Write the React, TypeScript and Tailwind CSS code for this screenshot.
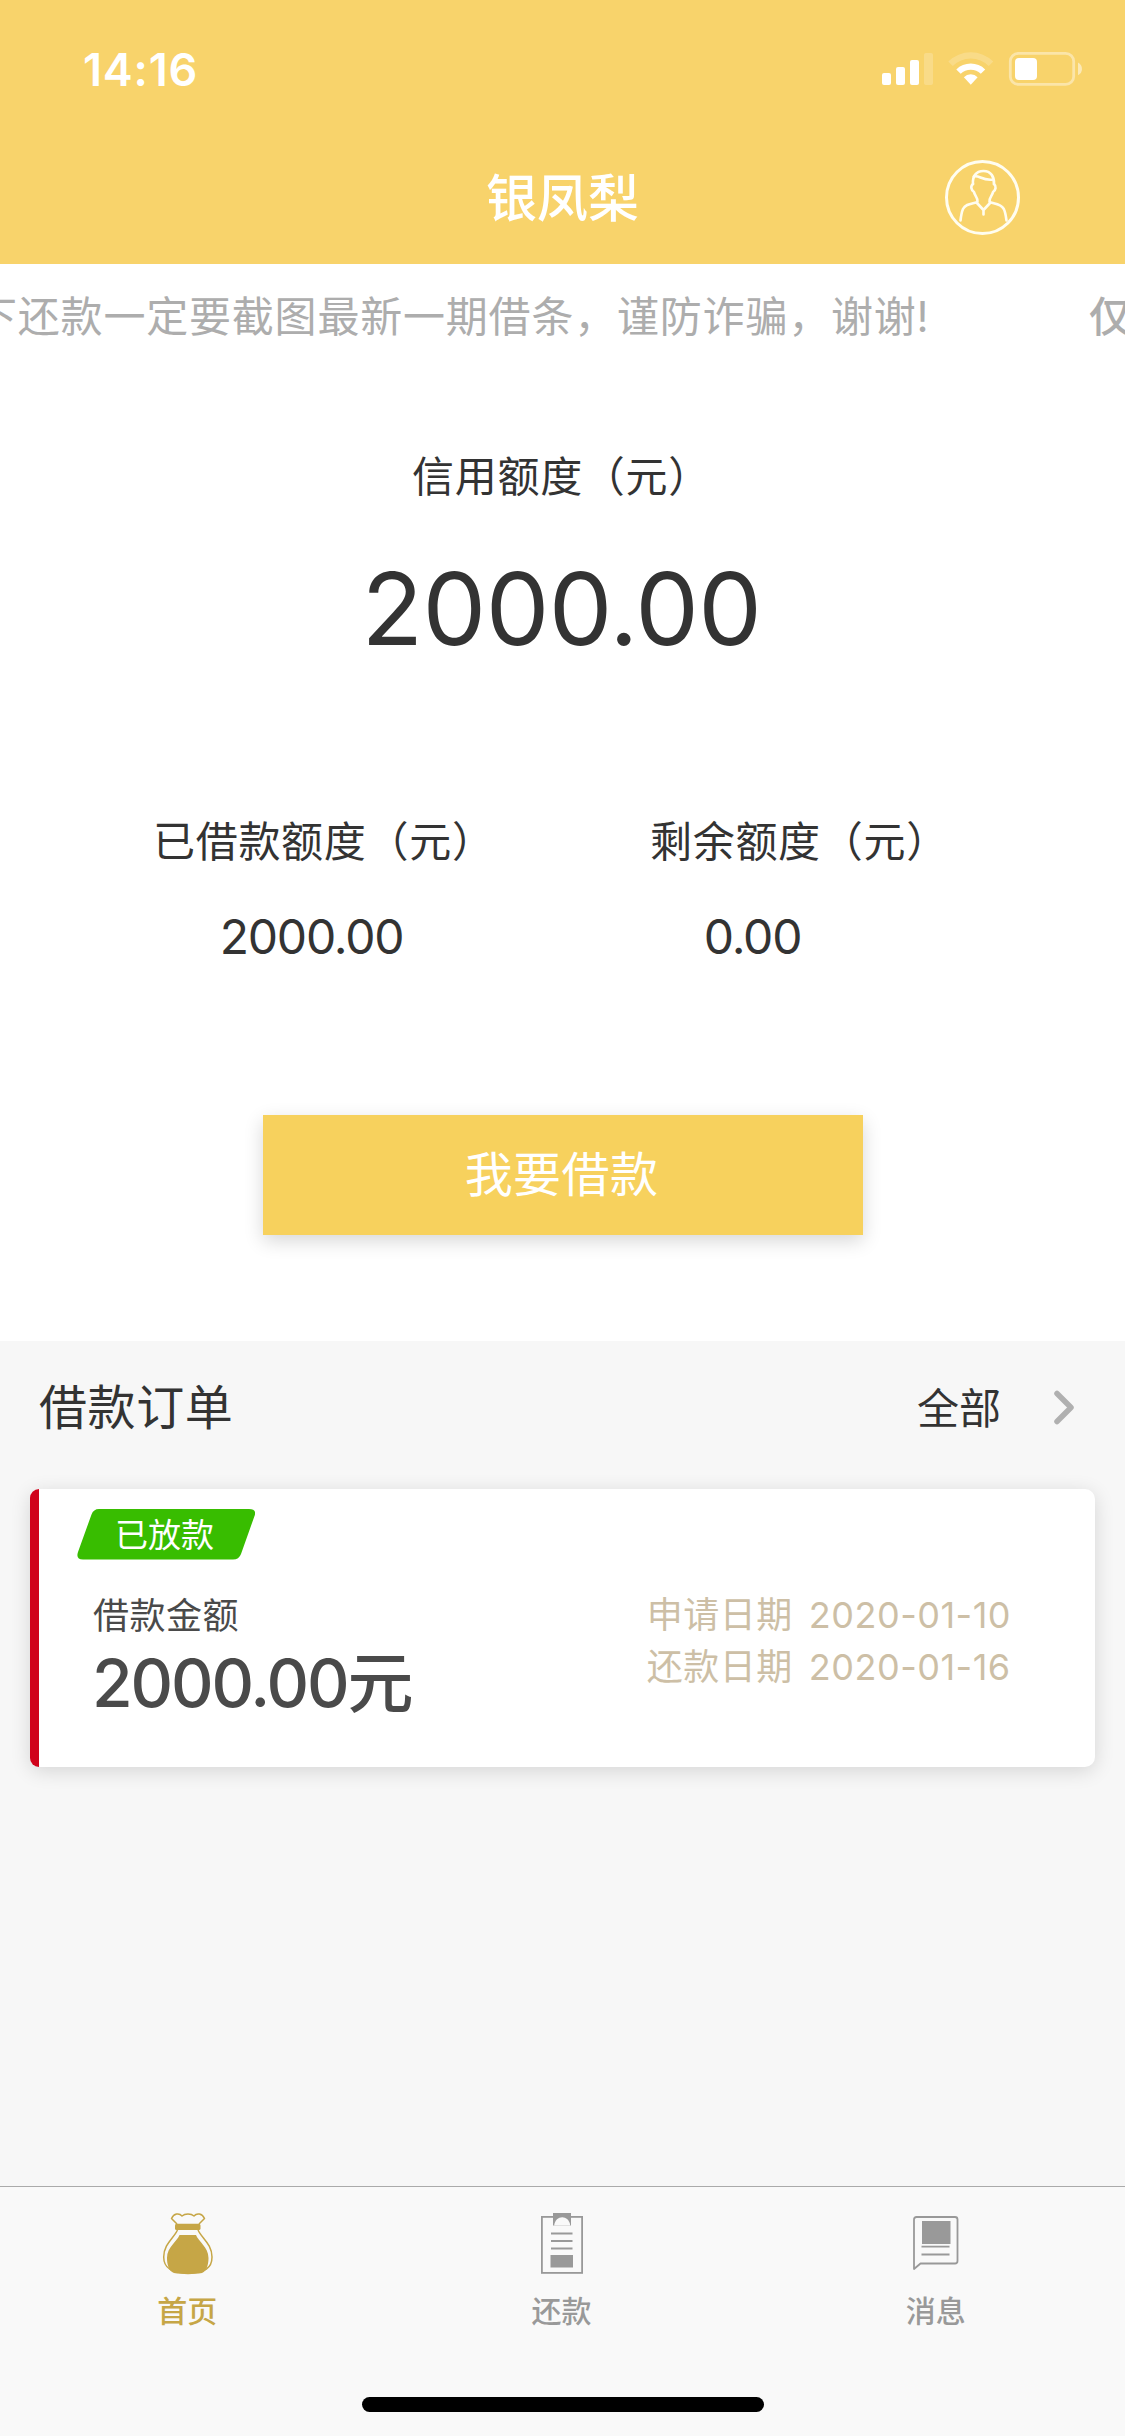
import type { ReactNode } from 'react';

interface Order {
  status: string;
  amount: string;
  applyDate: string;
  repayDate: string;
}

interface TabItem {
  label: string;
  icon: ReactNode;
  active?: boolean;
}

const orders: Order[] = [
  {
    status: '已放款',
    amount: '2000.00',
    applyDate: '2020-01-10',
    repayDate: '2020-01-16',
  },
];

function StatusIcons() {
  return (
    <svg width="202" height="38" viewBox="0 0 202 38" fill="#fff">
      <rect x="0" y="23" width="9" height="12" rx="2" />
      <rect x="14" y="17" width="9" height="18" rx="2" />
      <rect x="28" y="10" width="9" height="25" rx="2" />
      <rect x="42" y="3" width="9" height="32" rx="2" opacity="0.2" />
      <path
        d="M66.3 11.5 A32 32 0 0 1 111.2 11.5 L106.7 16 A25.5 25.5 0 0 0 70.8 16 Z"
        opacity="0.2"
      />
      <path d="M74.3 19.4 A20.7 20.7 0 0 1 103.2 19.4 L98.8 23.8 A14.3 14.3 0 0 0 78.7 23.8 Z" />
      <path d="M81.9 27.2 A9.5 9.5 0 0 1 95.6 27.2 L88.8 34.8 Z" />
      <rect
        x="128.3"
        y="3.4"
        width="63.4"
        height="31"
        rx="8"
        fill="none"
        stroke="#fff"
        strokeWidth="2.8"
        opacity="0.42"
      />
      <rect x="133" y="8" width="22" height="22" rx="4" />
      <path d="M196 12.5 C201.3 15 201.3 23 196 25.2 Z" opacity="0.5" />
    </svg>
  );
}

function UserIcon() {
  return (
    <svg
      width="76"
      height="76"
      viewBox="0 0 76 76"
      fill="none"
      stroke="#fffdf0"
      strokeWidth="2.6"
      strokeLinecap="round"
      strokeLinejoin="round"
    >
      <circle cx="37.5" cy="37.5" r="36" strokeWidth="3" />
      <path d="M28 24 C25.3 26 26 30 29 32 C29.5 35.5 33 38 32.5 41.5 L31.5 42.5 C26 44 20.5 44 18 49 C16.5 52.5 16 56 15.5 60.5" />
      <path d="M49 24 C51.5 26 51 30 48 32 C47.5 35.5 44 38 44.5 41.5 L45.5 42.5 C51 44 56 44 58.8 49 C60.5 52.5 60.8 56 61.5 60.5" />
      <path d="M28 24 C27.3 17 30.5 11 38.5 11 C46 11 49.5 17 49 24" />
      <path d="M28.8 16.5 C34 14.5 37 21 48 19.5" />
      <path d="M31.5 42.5 L38.5 50 L45.5 42.5 M38.5 50 V54.5" />
    </svg>
  );
}

function BagIcon() {
  return (
    <svg width="52" height="64" viewBox="0 0 52 64" fill="none" stroke="#c6a646" strokeWidth="1.5">
      <path
        d="M15 13 L9.5 7.5 C12 2.5 17 1.5 20 5 C23 2.3 29 2.3 32 5 C35 1.5 40 2.5 42.5 7.5 L37 13"
        strokeLinejoin="round"
      />
      <rect x="13" y="12.8" width="25.5" height="6.2" rx="1.6" fill="#c6a646" stroke="none" />
      <path d="M15.5 19 C12 27 1.7 33 1.7 46 C1.7 57 9 62 26 62 C43 62 50 57 50 46 C50 33 39.5 27 36 19" />
      <path
        d="M17.5 24 H34 C36 30 46.5 36 46.5 47 C46.5 53 45 60 40 62 C32 63.5 20 63.5 12 62 C6.5 60 5 53 5 47 C5 36 15.5 30 17.5 24 Z"
        fill="#c6a646"
        stroke="none"
      />
    </svg>
  );
}

function BillIcon() {
  return (
    <svg width="42" height="62" viewBox="0 0 42 62" fill="none" stroke="#999" strokeWidth="1.8">
      <rect x="0.9" y="3.9" width="40.2" height="56" />
      <path d="M12 0 H30 V12.5 H12 Z" fill="#999" stroke="none" />
      <path d="M13.2 12.6 C14.2 1.5 28.2 1.5 29.2 12.6 Z" fill="#f9f9f9" stroke="none" />
      <path d="M10 20.5 H31.5 M10 28 H31.5 M10 35.5 H31.5" />
      <rect x="9.5" y="42" width="22.5" height="12.5" fill="#999" stroke="none" />
    </svg>
  );
}

function MessageIcon() {
  return (
    <svg width="46" height="59" viewBox="0 0 46 59" fill="none" stroke="#999" strokeWidth="1.8">
      <path
        d="M1 53 V3.5 Q1 1 3.5 1 H42 Q44.5 1 44.5 3.5 V45 Q44.5 47.5 42 47.5 H7.5 Z"
        strokeLinejoin="round"
      />
      <rect x="9" y="5" width="28.5" height="23" fill="#999" stroke="none" />
      <path d="M8.5 30.7 H36.5 M8.5 38.5 H36.5" />
    </svg>
  );
}

const tabs: TabItem[] = [
  { label: '首页', icon: <BagIcon />, active: true },
  { label: '还款', icon: <BillIcon /> },
  { label: '消息', icon: <MessageIcon /> },
];

function QuotaLabel({ text }: { text: string }) {
  return (
    <p className="whitespace-nowrap text-[42px] leading-[60px] tracking-[0.7px]">{text}</p>
  );
}

function OrderCard({ order }: { order: Order }) {
  return (
    <div className="mx-[30px] flex h-[278px] rounded-[10px] bg-white shadow-[0_4px_20px_rgba(0,0,0,0.14)]">
      <div className="w-[9px] shrink-0 rounded-l-[10px] bg-[#d0021b]" />
      <div className="flex flex-1 justify-between pl-[38px] pr-[84px]">
        <div className="pt-[19px]">
          <div className="relative flex h-[52px] w-[178px] items-center justify-center">
            <svg className="absolute inset-0" width="178" height="52" viewBox="0 0 178 52">
              <path
                d="M22 1 H172 Q180 1 177.5 8 L164 46 Q162 51.5 156 51.5 H6 Q-1.5 51.5 1 44 L14.5 6.5 Q16.5 1 22 1 Z"
                fill="#38bd00"
              />
            </svg>
            <span className="relative pr-[3px] pt-px text-[33px] leading-[40px] text-white">{order.status}</span>
          </div>
          <div className="pl-[16px]">
            <p className="mt-[32px] text-[36px] leading-[48px] tracking-[0.5px] text-[#4a4a4a]">借款金额</p>
            <p className="-ml-px mt-[7px] flex items-baseline text-[66px] font-medium leading-[72px] text-[#4a4a4a]">
              <span className="tracking-[-2.1px]">{order.amount}</span>
              <span>元</span>
            </p>
          </div>
        </div>
        <div className="pt-[100px] text-[36px] leading-[52px] tracking-[0.5px] text-[#cdbfa6]">
          <div className="flex gap-4">
            <span>申请日期</span>
            <span>{order.applyDate}</span>
          </div>
          <div className="flex gap-4">
            <span>还款日期</span>
            <span>{order.repayDate}</span>
          </div>
        </div>
      </div>
    </div>
  );
}

export default function App() {
  return (
    <div
      lang="zh-CN"
      className="flex h-[2436px] w-[1125px] flex-col overflow-hidden bg-white font-['Inter','Noto_Sans_CJK_SC',sans-serif] text-[#333]"
    >
      <header className="h-[264px] shrink-0 bg-[#f8d36b] text-white">
        <div className="flex h-[132px] items-center justify-between pl-[83px] pr-[41px] pt-[6px]">
          <span className="pt-px text-[45px] font-semibold leading-[54px] tracking-[0.8px]">14:16</span>
          <StatusIcons />
        </div>
        <div className="grid h-[132px] grid-cols-[1fr_auto_1fr] items-center">
          <div />
          <h1 className="pt-[2px] text-[51px] font-medium leading-[60px]">银凤梨</h1>
          <div className="flex justify-end pr-[104px]">
            <UserIcon />
          </div>
        </div>
      </header>

      {/* scrolling notice */}
      <div className="flex h-[106px] shrink-0 items-center overflow-hidden whitespace-nowrap text-[42px] leading-[60px] tracking-[0.8px] text-[#adadad]">
        <span className="-ml-[25px] w-[1114px] shrink-0">下还款一定要截图最新一期借条，谨防诈骗，谢谢!</span>
        <span className="font-medium">仅</span>
      </div>

      <section className="flex h-[971px] shrink-0 flex-col items-center">
        <div className="mr-[2px] mt-[77px]">
          <QuotaLabel text="信用额度（元）" />
        </div>
        <p className="mr-[2px] mt-[41px] text-[101px] leading-[120px] tracking-[-0.6px]">2000.00</p>
        <div className="mt-[144px] flex w-full">
          <div className="w-[562px] pl-[153px]">
            <QuotaLabel text="已借款额度（元）" />
            <p className="mt-[35px] w-[317px] text-center text-[48px] leading-[60px] tracking-[-1.2px]">2000.00</p>
          </div>
          <div className="w-[563px] pl-[88px]">
            <QuotaLabel text="剩余额度（元）" />
            <p className="mt-[35px] w-[205px] text-center text-[48px] leading-[60px] tracking-[-1.2px]">0.00</p>
          </div>
        </div>
        <button className="mt-[148px] h-[120px] w-[600px] bg-[#f7d15d] pr-[2px] text-[48px] tracking-[0.4px] text-white shadow-[0_6px_18px_rgba(0,0,0,0.16)]">
          我要借款
        </button>
      </section>

      <section className="flex-1 bg-[#f7f7f7]">
        <div className="flex h-[148px] items-center justify-between pb-[14px] pl-[39px] pr-[48px]">
          <h2 className="text-[48px] leading-[60px] tracking-[0.6px]">借款订单</h2>
          <div className="flex items-center">
            <span className="pt-[2px] text-[42px] leading-[60px]">全部</span>
            <svg className="ml-[52px]" width="24" height="36" viewBox="0 0 24 36" fill="none">
              <path
                d="M4 3.5 L18 17.5 L4 31.5"
                stroke="#b0b0b0"
                strokeWidth="5.5"
                strokeLinecap="round"
                strokeLinejoin="round"
              />
            </svg>
          </div>
        </div>
        {orders.map((order, index) => (
          <OrderCard key={index} order={order} />
        ))}
      </section>

      <nav className="flex h-[250px] shrink-0 flex-col items-center border-t border-[#aaa] bg-[#f9f9f9]">
        <div className="flex w-full pr-[2px]">
          {tabs.map((tab) => (
            <div
              key={tab.label}
              className={`flex flex-1 flex-col items-center ${tab.active ? 'text-[#c6a646]' : 'text-[#999]'}`}
            >
              <div className="flex h-[90px] items-end pb-[2px] pl-px">{tab.icon}</div>
              <span className="mt-[12px] text-[30px] font-medium leading-[44px]">{tab.label}</span>
            </div>
          ))}
        </div>
        <div className="mt-[64px] h-[15px] w-[402px] rounded-full bg-black" />
      </nav>
    </div>
  );
}
